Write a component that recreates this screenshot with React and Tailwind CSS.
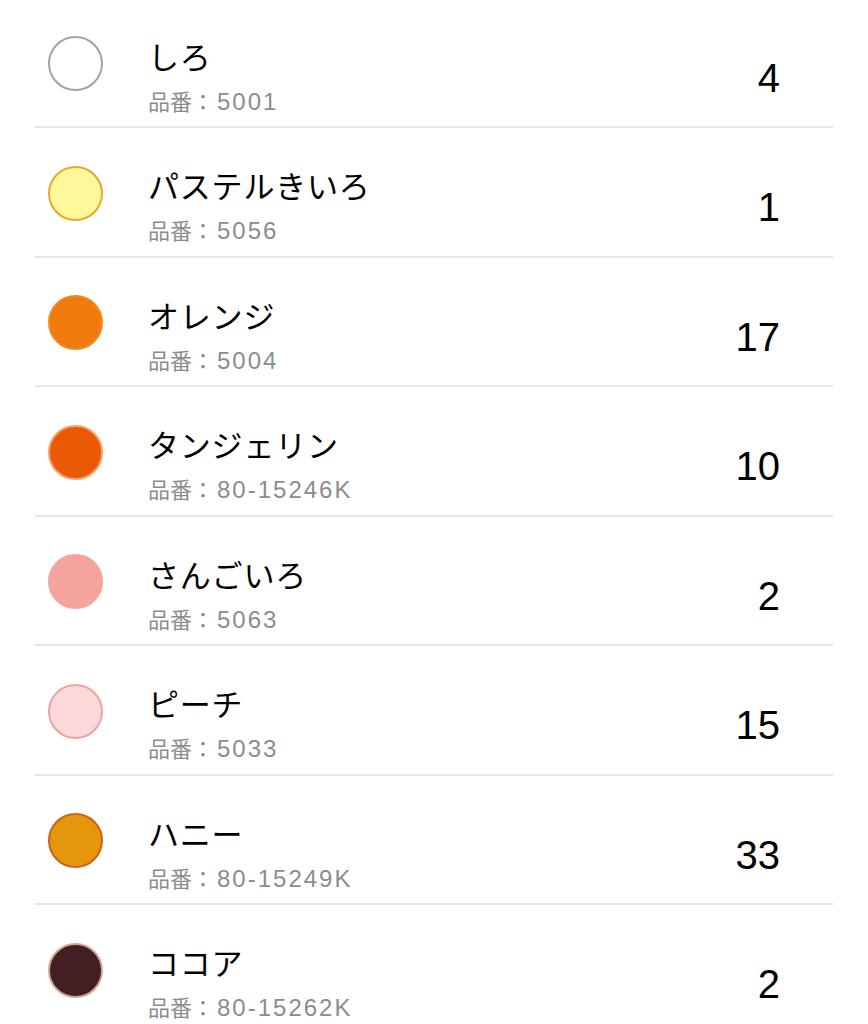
const colors = [
  { name: 'しろ', code: '5001', count: 4, fill: 'bg-white', ring: 'border-[#a3a3a3]' },
  { name: 'パステルきいろ', code: '5056', count: 1, fill: 'bg-[#fff89a]', ring: 'border-[#eaa82a]' },
  { name: 'オレンジ', code: '5004', count: 17, fill: 'bg-[#f07b0c]', ring: 'border-[#f08a22]' },
  { name: 'タンジェリン', code: '80-15246K', count: 10, fill: 'bg-[#ea5a04]', ring: 'border-[#f5a068]' },
  { name: 'さんごいろ', code: '5063', count: 2, fill: 'bg-[#f2a49d]', ring: 'border-[#f2a49d]' },
  { name: 'ピーチ', code: '5033', count: 15, fill: 'bg-[#fdd8d8]', ring: 'border-[#eda3a3]' },
  { name: 'ハニー', code: '80-15249K', count: 33, fill: 'bg-[#e6960a]', ring: 'border-[#c6661c]' },
  { name: 'ココア', code: '80-15262K', count: 2, fill: 'bg-[#431f23]', ring: 'border-[#caa990]' },
];

const font = { fontFamily: '"Liberation Sans", "Noto Sans CJK JP", sans-serif' };

function ColorRow({ item }) {
  return (
    <div className="h-[129.5px] flex flex-col">
      <div className="flex-1 flex">
        <div className="w-[148px] shrink-0 pl-12 pt-[37.5px]">
          <div className={`w-[55px] h-[55px] rounded-full border-2 ${item.fill} ${item.ring}`}></div>
        </div>
        <div className="flex-1 flex flex-col pt-[42px]">
          <div className="text-[31px] leading-[36px] tracking-[0.8px] text-black">{item.name}</div>
          <div className="mt-[11px] text-[22px] leading-[28px] text-[#8c8c8c]">
            品番：<span className="ml-[3px] text-[24px] tracking-[2px]">{item.code}</span>
          </div>
        </div>
        <div className="w-[88px] shrink-0 pt-[59px] pr-[88px] box-content text-right text-[40px] leading-[40px] text-black">
          {item.count}
        </div>
      </div>
      <div className="mx-[35px] h-[2px] bg-[#e6e6e6]"></div>
    </div>
  );
}

export default function App() {
  return (
    <div className="w-[868px] h-[1024px] overflow-hidden bg-white" style={font}>
      <div className="-mt-[1.5px]">
        {colors.map((c) => (
          <ColorRow key={c.code + c.name} item={c} />
        ))}
      </div>
    </div>
  );
}
